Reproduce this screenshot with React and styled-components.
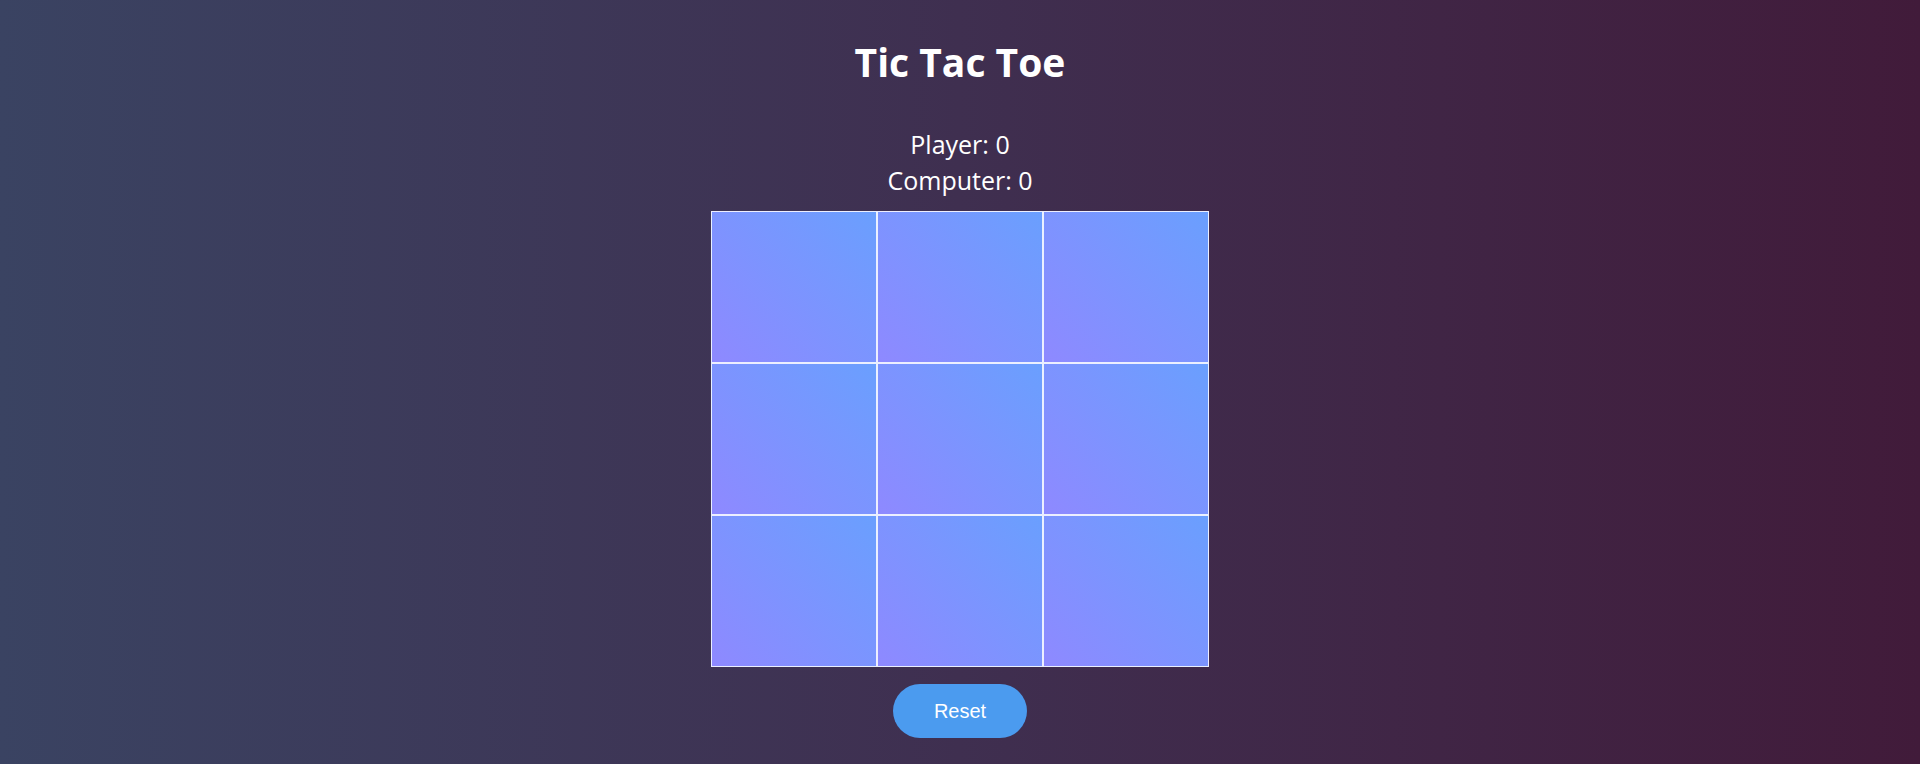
import React, { useState } from 'react';
import styled, { createGlobalStyle } from 'styled-components';

const GlobalStyle = createGlobalStyle`
    html, body {
        margin: 0;
        padding: 0;
    }
    html {
        overflow-y: scroll;
    }
    ::-webkit-scrollbar {
        width: 21px;
        background: #f1f1f1;
    }
    ::-webkit-scrollbar-thumb {
        background: #c1c1c1;
        border-left: 3px solid #f1f1f1;
        border-right: 2px solid #f1f1f1;
    }
    body {
        background: linear-gradient(to right, #3a4362, #3f2f50 50%, #411b3a);
        font-family: "Open Sans", "Noto Sans", sans-serif;
        color: #ffffff;
    }
`

const Page = styled.div`
    display: flex;
    flex-direction: column;
    align-items: center;
    min-height: 898px;
    box-sizing: border-box;
    padding-top: 35px;
`

const Title = styled.h1`
    margin: 0;
    font-size: 39px;
    font-weight: 700;
    line-height: 54px;
`

const Scores = styled.div`
    margin-top: 37px;
    display: flex;
    flex-direction: column;
    align-items: center;
    font-size: 25px;
    line-height: 36px;
`

const Board = styled.div`
    margin-top: 13px;
    width: 499px;
    display: grid;
    grid-template-columns: repeat(3, 1fr);
`

const Cell = styled.div`
    height: 152px;
    box-sizing: border-box;
    border: 1px solid rgba(255, 255, 255, 0.85);
    background: linear-gradient(45deg, #8e89ff, #6a9ffe);
    display: flex;
    align-items: center;
    justify-content: center;
    font-size: 80px;
    font-weight: 700;
    color: #ffffff;
    cursor: pointer;
`

const ResetButton = styled.button`
    margin-top: 17px;
    width: 134px;
    height: 54px;
    border: none;
    border-radius: 27px;
    background: #4b9bef;
    color: #ffffff;
    font-family: "Liberation Sans", Arial, sans-serif;
    font-size: 20px;
    cursor: pointer;
`

const App = () => {
    const [cells, setCells] = useState(Array(9).fill(''));
    const [score] = useState({ player: 0, computer: 0 });

    const onReset = () => setCells(Array(9).fill(''));

    return (
    <>
        <GlobalStyle />
        <Page>
            <Title>Tic Tac Toe</Title>
            <Scores>
                <div>Player: {score.player}</div>
                <div>Computer: {score.computer}</div>
            </Scores>
            <Board>
                {cells.map((value, i) => (
                    <Cell key={i}>{value}</Cell>
                ))}
            </Board>
            <ResetButton onClick={onReset}>Reset</ResetButton>
        </Page>
    </>
)}

export default App;
